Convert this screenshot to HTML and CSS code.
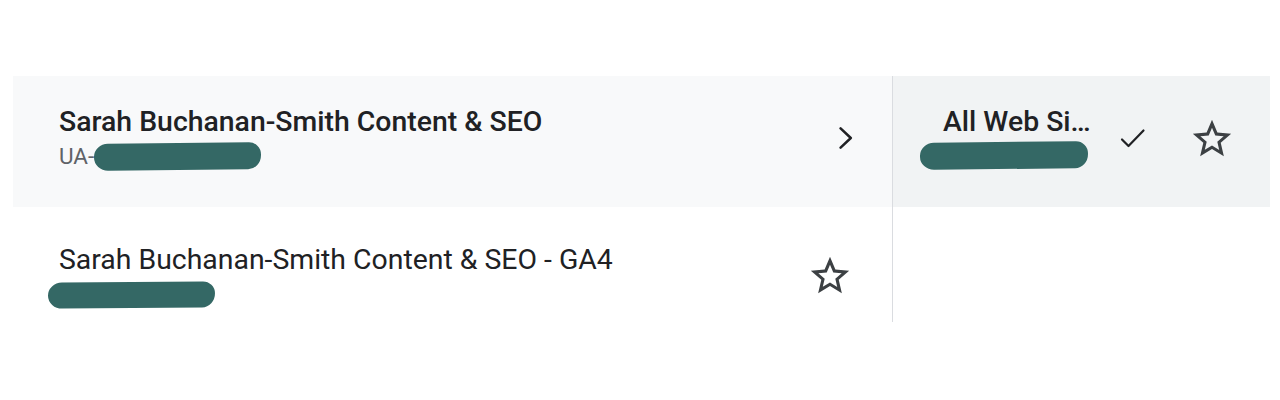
FILE: index.html
```html
<!DOCTYPE html>
<html lang="en">
<head>
<meta charset="utf-8">
<title>Account picker</title>
<link rel="stylesheet" href="styles.css">
</head>
<body>
<div class="picker">
  <div class="col-left">
    <div class="row row-selected">
      <div class="info">
        <div class="title strong">Sarah Buchanan-Smith Content &amp; SEO</div>
        <div class="sub">
          <span class="sub-text">UA-</span>
          <span class="redact redact-a"></span>
        </div>
      </div>
      <svg class="chev" width="14" height="22" viewBox="0 0 14 22" aria-hidden="true">
        <polyline points="1.6,1.4 11.8,11 1.6,20.6" fill="none" stroke="#202124" stroke-width="2.5" stroke-linecap="round" stroke-linejoin="round"/>
      </svg>
    </div>
    <div class="row row-plain">
      <div class="info">
        <div class="title">Sarah Buchanan-Smith Content &amp; SEO - GA4</div>
        <span class="redact redact-b"></span>
      </div>
      <svg class="star star-left" width="46" height="46" viewBox="0 0 24 24" aria-hidden="true">
        <path fill="#3c4043" d="M22 9.24l-7.19-.62L12 2 9.19 8.63 2 9.24l5.46 4.73L5.82 21 12 17.27 18.18 21l-1.63-7.03L22 9.24zM12 15.4l-3.76 2.27 1-4.28-3.32-2.88 4.38-.38L12 6.1l1.71 4.04 4.38.38-3.32 2.88 1 4.28L12 15.4z"/>
      </svg>
    </div>
  </div>
  <div class="col-right">
    <div class="row row-active">
      <div class="info info-narrow">
        <div class="title strong">All Web Si…</div>
        <span class="redact redact-c"></span>
      </div>
      <svg class="check" width="26" height="21" viewBox="0 0 26 21" aria-hidden="true">
        <polyline points="2,11.5 8.5,18 23.5,2.5" fill="none" stroke="#202124" stroke-width="2.2" stroke-linecap="round" stroke-linejoin="round"/>
      </svg>
      <svg class="star star-right" width="46" height="46" viewBox="0 0 24 24" aria-hidden="true">
        <path fill="#3c4043" d="M22 9.24l-7.19-.62L12 2 9.19 8.63 2 9.24l5.46 4.73L5.82 21 12 17.27 18.18 21l-1.63-7.03L22 9.24zM12 15.4l-3.76 2.27 1-4.28-3.32-2.88 4.38-.38L12 6.1l1.71 4.04 4.38.38-3.32 2.88 1 4.28L12 15.4z"/>
      </svg>
    </div>
  </div>
</div>
</body>
</html>
```
FILE: styles.css
```css
html, body {
  margin: 0;
  padding: 0;
  background: #ffffff;
}

body {
  font-family: Roboto, "Liberation Sans", Arial, sans-serif;
  color: #202124;
}

.picker {
  display: flex;
  margin: 76px 10px 0 13px;
  width: 1257px;
  height: 246px;
}

.col-left {
  width: 879px;
  display: flex;
  flex-direction: column;
}

.col-right {
  flex: 1;
  border-left: 1px solid #dadce0;
  display: flex;
  flex-direction: column;
}

.row {
  display: flex;
  align-items: flex-start;
  box-sizing: border-box;
}

.row-selected {
  height: 131px;
  background: #f8f9fa;
  padding: 30px 39px 0 46px;
}

.row-plain {
  height: 115px;
  background: #ffffff;
  padding: 37px 39px 0 46px;
}

.row-active {
  height: 131px;
  background: #f1f3f4;
  padding: 30px 35px 0 50px;
}

.info {
  flex: 1;
  display: flex;
  flex-direction: column;
  align-items: flex-start;
  min-width: 0;
}

.info-narrow {
  flex: none;
  width: 152px;
}

.title {
  font-size: 28.4px;
  line-height: 32px;
  font-weight: 400;
  white-space: nowrap;
}

.title.strong {
  font-weight: 500;
}

.sub {
  display: flex;
  align-items: center;
  height: 28px;
  margin-top: 4px;
}

.sub-text {
  font-size: 22.5px;
  line-height: 28px;
  color: #5f6368;
}

.redact {
  display: block;
  background: #346865;
  border-radius: 14px 12px 13px 14px / 13px 12px 14px 13px;
}

.redact-a {
  width: 167px;
  height: 27px;
  margin-left: 0;
  transform: rotate(-0.6deg);
}

.redact-b {
  width: 167px;
  height: 26px;
  margin-top: 6px;
  margin-left: -11px;
  transform: rotate(-0.5deg);
}

.redact-c {
  width: 168px;
  height: 27px;
  margin-top: 4px;
  margin-left: -23px;
  transform: rotate(-0.6deg);
}

.chev {
  margin-top: 21px;
  flex: none;
}

.star {
  flex: none;
}

.star-left {
  margin-top: 9px;
}

.check {
  flex: none;
  margin-left: 25px;
  margin-top: 22px;
}

.star-right {
  margin-left: 43px;
  margin-top: 10px;
}
```
